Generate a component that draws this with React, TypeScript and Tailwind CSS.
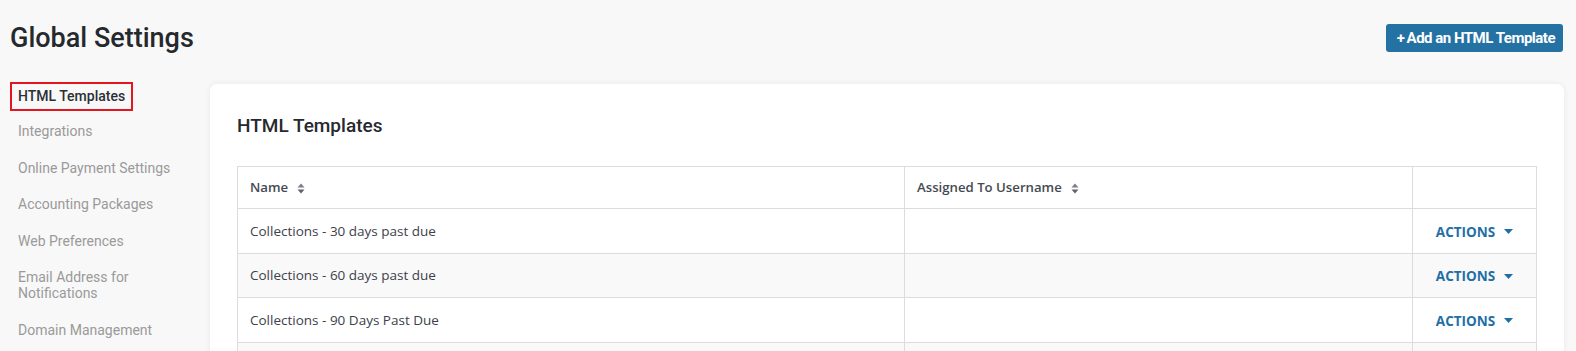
import { type ReactNode } from 'react';

const NAV_ITEMS = [
  'Integrations',
  'Online Payment Settings',
  'Accounting Packages',
  'Web Preferences',
  'Email Address for Notifications',
  'Domain Management',
];

const TEMPLATES = ['Collections - 30 days past due', 'Collections - 60 days past due', 'Collections - 90 Days Past Due', ''];

function SortIcon() {
  return (
    <svg width="8" height="11" viewBox="0 0 8 11" className="ml-[9px] inline-block">
      <path d="M4 0.5 L7.5 4.5 L0.5 4.5 Z" fill="#7a7f86" />
      <path d="M4 10.5 L7.5 6.5 L0.5 6.5 Z" fill="#5f646b" />
    </svg>
  );
}

function Caret() {
  return (
    <svg width="9" height="5" viewBox="0 0 9 5" className="ml-[9px] inline-block">
      <path d="M0 0 H9 L4.5 5 Z" fill="#1f6fa6" />
    </svg>
  );
}

function HeaderCell({ children }: { children?: ReactNode }) {
  return (
    <th className="h-[42px] border border-[#dcdcdc] px-[12px] text-left align-middle font-semibold text-[13.2px] text-[#454a52]">
      {children}
    </th>
  );
}

function Sidebar() {
  return (
    <nav className="w-[200px] shrink-0 font-['Roboto',sans-serif] text-[14px]">
      <div className="mb-[2px] inline-block border-2 border-[#e3161f] px-[6px] py-[4px] leading-[17px] font-medium text-[#2b2f36]">
        HTML Templates
      </div>
      {NAV_ITEMS.map((item) => (
        <div key={item} className="w-[170px] py-[10.25px] pl-[8px] leading-[16px] text-[#9a9a9a]">
          {item}
        </div>
      ))}
    </nav>
  );
}

function TemplatesCard() {
  return (
    <section className="mt-[2px] flex-1 rounded-[7px] bg-white px-[27px] pt-[28px] shadow-[0_0_6px_rgba(0,0,0,0.07)]">
      <h2 className="mb-[26px] font-['Roboto',sans-serif] text-[19px] leading-[28px] font-medium text-[#26292e]">
        HTML Templates
      </h2>
      <table className="w-full table-fixed border-collapse font-['Open_Sans',sans-serif]">
        <colgroup>
          <col className="w-[667px]" />
          <col className="w-[508px]" />
          <col className="w-[124px]" />
        </colgroup>
        <thead>
          <tr>
            <HeaderCell>
              Name
              <SortIcon />
            </HeaderCell>
            <HeaderCell>
              Assigned To Username
              <SortIcon />
            </HeaderCell>
            <HeaderCell />
          </tr>
        </thead>
        <tbody>
          {TEMPLATES.map((name, index) => (
            <tr key={index} className={index % 2 === 1 ? 'bg-[#f9f9f9]' : 'bg-white'}>
              <td className="h-[44.5px] border border-[#dcdcdc] px-[12px] text-[13.5px] text-[#3d4249]">{name}</td>
              <td className="h-[44.5px] border border-[#dcdcdc]" />
              <td className="h-[44.5px] border border-[#dcdcdc] text-center">
                {name && (
                  <span className="inline-flex items-center text-[13.5px] font-bold text-[#1f6fa6]">
                    ACTIONS
                    <Caret />
                  </span>
                )}
              </td>
            </tr>
          ))}
        </tbody>
      </table>
    </section>
  );
}

export default function App() {
  return (
    <div className="h-[351px] overflow-hidden bg-[#f8f8f8] pl-[10px] pr-[13px]">
      <header className="flex items-center justify-between pt-[24px]">
        <h1 className="font-['Roboto',sans-serif] text-[27px] leading-[28px] font-medium text-[#25282d]">Global Settings</h1>
        <button
          type="button"
          className="flex h-[28px] items-center rounded-[3px] bg-[#2472a4] pl-[11px] pr-[8px] font-['Roboto',sans-serif] text-[15px] font-bold tracking-[-0.5px] text-white"
        >
          <span className="mr-[2px]">+</span>Add an HTML Template
        </button>
      </header>
      <div className="mt-[30px] flex">
        <Sidebar />
        <TemplatesCard />
      </div>
    </div>
  );
}
